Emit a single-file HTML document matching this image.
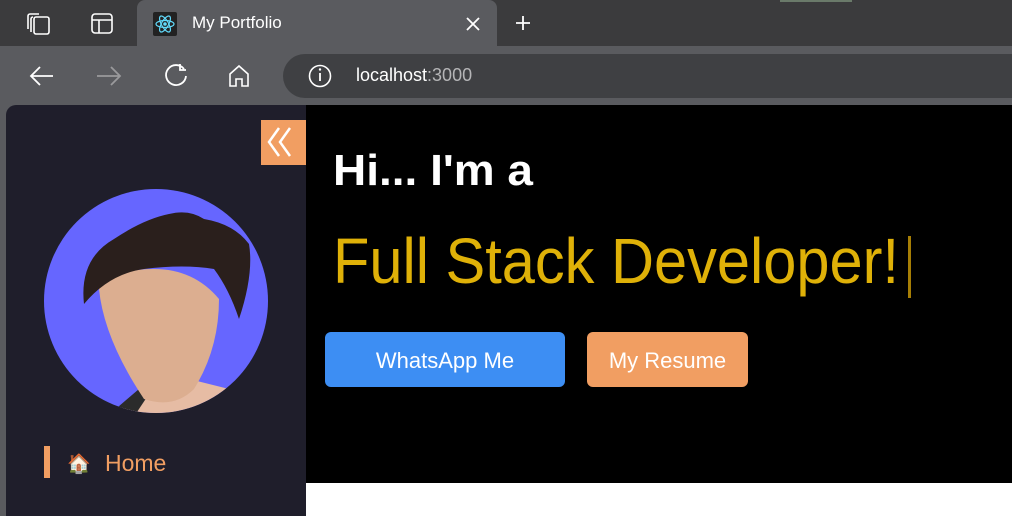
<!DOCTYPE html>
<html><head><meta charset="utf-8"><style>
*{margin:0;padding:0;box-sizing:border-box}
body{width:1012px;height:516px;overflow:hidden;background:#5a5b5f;font-family:"Liberation Sans","DejaVu Sans",sans-serif;position:relative}
.abs{position:absolute}
</style></head><body>
<div class="abs" style="left:0;top:0;width:1012px;height:46px;background:#3b3b3d"></div>
<div class="abs" style="left:137px;top:0;width:360px;height:48px;background:#5a5b5f;border-radius:8px 8px 0 0"></div>
<div class="abs" style="left:780px;top:0;width:72px;height:2px;background:#6a7a6a"></div>
<div class="abs" style="left:283px;top:54px;width:760px;height:44px;border-radius:22px;background:#3f4043"></div>
<svg class="abs" style="left:0;top:0" width="1012" height="104">
 <g fill="none" stroke="#fff" stroke-width="1.6">
  <rect x="34" y="17" width="15" height="17" rx="2"/>
  <path d="M28 29V16a2 2 0 0 1 2-2h9M31 32V19a2 2 0 0 1 2-2"/>
  <rect x="92" y="14" width="20" height="19" rx="3"/><path d="M92 20h20M99 20v13"/>
  <path d="M516 23h14M523 16v14" stroke-width="1.8"/>
  <path d="M467 18l12 12M479 18l-12 12" stroke-width="1.8"/>
  <path d="M53 76H31M40 67l-9 9 9 9" stroke-width="1.8"/>
  <path d="M120 76H97M111 67l9 9-9 9" stroke="#9a9a9c" stroke-width="1.8"/>
  <path d="M184 69a10 10 0 1 0 2 7M180 64v6h6" stroke-width="1.8"/>
  <path d="M230 86V74l9-8 9 8v12h-6v-7h-6v7z" stroke-width="1.6"/>
  <circle cx="320" cy="76" r="10.5" stroke-width="1.6"/><path d="M320 73v8" stroke-width="1.8"/>
 </g>
 <circle cx="320" cy="69.5" r="1.2" fill="#fff"/>
 <rect x="153" y="12" width="24" height="24" rx="2" fill="#222"/>
 <g fill="none" stroke="#61dafb" stroke-width="1.2"><ellipse cx="165" cy="24" rx="9" ry="3.5"/><ellipse cx="165" cy="24" rx="9" ry="3.5" transform="rotate(60 165 24)"/><ellipse cx="165" cy="24" rx="9" ry="3.5" transform="rotate(-60 165 24)"/></g>
 <circle cx="165" cy="24" r="1.8" fill="#61dafb"/>
</svg>
<div class="abs" style="left:192px;top:13px;color:#fff;font-size:17px">My Portfolio</div>
<div class="abs" style="left:356px;top:65px;color:#fff;font-size:18px">localhost<span style="color:#b5b5b7">:3000</span></div>

<div class="abs" style="left:6px;top:105px;width:300px;height:411px;background:#1f1e2b;border-radius:10px 0 0 0"></div>
<div class="abs" style="left:306px;top:105px;width:706px;height:378px;background:#000"></div>
<div class="abs" style="left:306px;top:483px;width:706px;height:33px;background:#fff"></div>
<div class="abs" style="left:261px;top:120px;width:45px;height:45px;background:#f19e62"></div>
<svg class="abs" style="left:261px;top:120px" width="45" height="45"><path d="M18 8L8 22l10 14M29 8L19 22l10 14" fill="none" stroke="#fff" stroke-width="2.5"/></svg>
<svg class="abs" style="left:44px;top:189px" width="226" height="226">
 <defs><clipPath id="c"><circle cx="112" cy="112" r="112"/></clipPath></defs>
 <circle cx="112" cy="112" r="112" fill="#6666ff"/>
 <g clip-path="url(#c)">
  <path d="M60 235l40-35 45-10 60 15 10 30z" fill="#e6bca4"/>
  <path d="M60 230l35-30 10 5-20 30z" fill="#2b2b2b"/>
  <path d="M55 100q5 50 45 110 30 10 50-10 25-40 25-90-25-30-65-30-40 0-55 20z" fill="#dcae90"/>
  <path d="M40 115q-5-45 30-65 30-20 55-25 20-5 35 5 30 5 45 25 5 30-10 75-10-30-25-50-30-5-70 0-35 5-60 35z" fill="#2a1f1c"/>
 </g>
</svg>
<div class="abs" style="left:44px;top:446px;width:6px;height:32px;background:#f19e62"></div>
<div class="abs" style="left:67px;top:452px;font-size:19px">🏠</div>
<div class="abs" style="left:105px;top:450px;color:#f19e62;font-size:23px">Home</div>

<svg class="abs" style="left:306px;top:105px" width="706" height="300">
 <text x="27" y="80" fill="#fff" font-family="Liberation Sans, sans-serif" font-weight="bold" font-size="44" textLength="200" lengthAdjust="spacingAndGlyphs">Hi... I'm a</text>
 <text x="27" y="178" fill="#dfb108" font-family="Liberation Sans, sans-serif" font-size="64" textLength="566" lengthAdjust="spacingAndGlyphs">Full Stack Developer!</text>
 <rect x="602" y="131" width="3" height="62" fill="#a67e05"/>
</svg>
<div class="abs" style="left:325px;top:332px;width:240px;height:55px;border-radius:6px;background:#3d8ef3;color:#fff;font-size:22px;line-height:58px;text-align:center">WhatsApp Me</div>
<div class="abs" style="left:587px;top:332px;width:161px;height:55px;border-radius:6px;background:#f19e62;color:#fff;font-size:22px;line-height:58px;text-align:center">My Resume</div>
</body></html>
